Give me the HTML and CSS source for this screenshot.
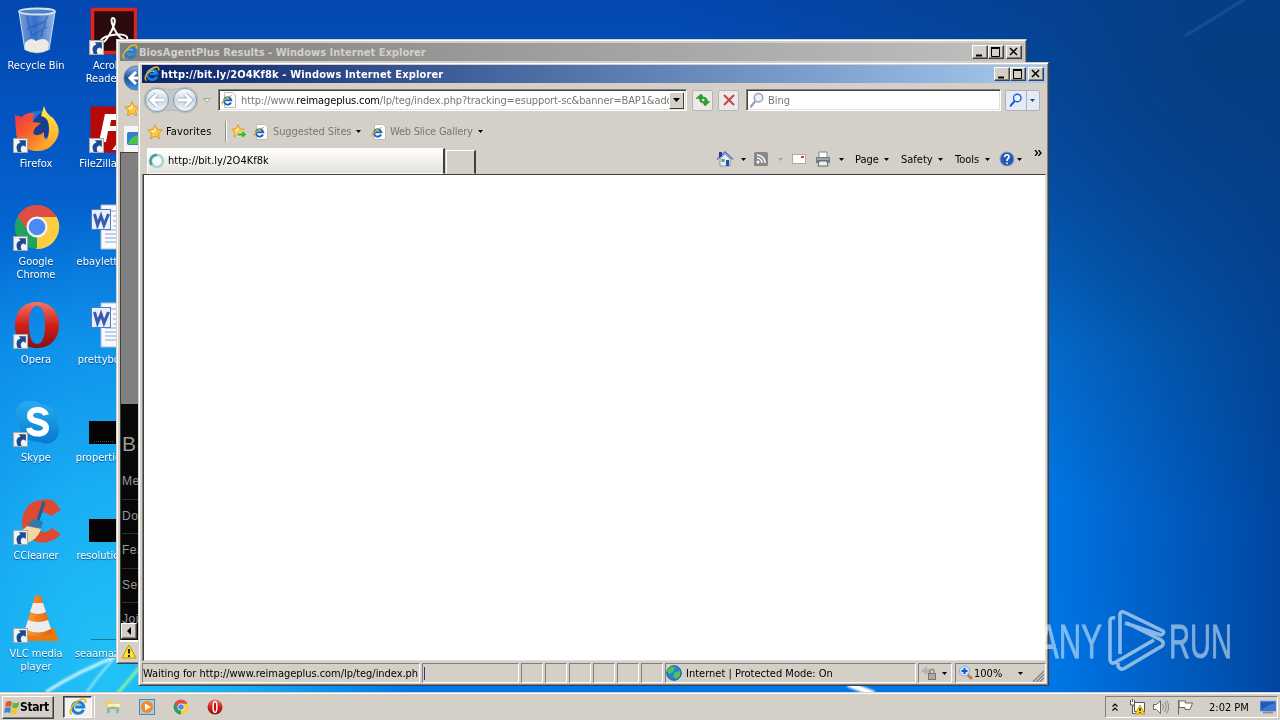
FILE: index.html
```html
<!DOCTYPE html>
<html lang="en">
<head>
<meta charset="utf-8">
<title>Desktop</title>
<link rel="stylesheet" href="styles.css">
</head>
<body>
<svg class="defs" width="0" height="0">
  <defs>
    <linearGradient id="red" x1="0" y1="0" x2="0" y2="1"><stop offset="0" stop-color="#f27468"/><stop offset=".5" stop-color="#d02018"/><stop offset="1" stop-color="#86100c"/></linearGradient>
    <linearGradient id="ball" x1="0" y1="0" x2="0" y2="1"><stop offset="0" stop-color="#fff"/><stop offset=".5" stop-color="#cbd9e4"/><stop offset="1" stop-color="#edf6fb"/></linearGradient>
    <linearGradient id="ballblue" x1="0" y1="0" x2="0" y2="1"><stop offset="0" stop-color="#8fb6e8"/><stop offset=".5" stop-color="#1d4f9e"/><stop offset="1" stop-color="#3f9be6"/></linearGradient>
    <linearGradient id="fox" x1="0" y1="0" x2="1" y2="1"><stop offset="0" stop-color="#f0304a"/><stop offset=".45" stop-color="#f8652a"/><stop offset="1" stop-color="#ffc62e"/></linearGradient>
    <linearGradient id="tail" x1="0" y1="0" x2="0" y2="1"><stop offset="0" stop-color="#fff04a"/><stop offset="1" stop-color="#ff9a22"/></linearGradient>
    <linearGradient id="glass" x1="0" y1="0" x2="1" y2="0"><stop offset="0" stop-color="#8fb0dc"/><stop offset=".45" stop-color="#3b74cc"/><stop offset="1" stop-color="#b3cdec"/></linearGradient>
    <linearGradient id="skype" x1="0" y1="0" x2="0" y2="1"><stop offset="0" stop-color="#25aef0"/><stop offset="1" stop-color="#0878d0"/></linearGradient>
    <linearGradient id="cone" x1="0" y1="0" x2="1" y2="0"><stop offset="0" stop-color="#ffa040"/><stop offset="1" stop-color="#e06008"/></linearGradient>
  </defs>
  <symbol id="shortcut" viewBox="0 0 14 14"><rect x=".5" y=".5" width="13" height="13" fill="#f2f4f8" stroke="#a9a9a9"/><path d="M4.500 13C2 8 4 4.500 7 4.500L5.500 2H12V8.500L10 7C7.500 7.500 6.500 9.500 8 13Z" fill="#1d4a8c"/></symbol>
  <symbol id="ie" viewBox="0 0 16 16"><path d="M12.800 10.400A5 5 0 1 1 13.100 8H5.500" fill="none" stroke="#1a7fd6" stroke-width="2.700"/><path d="M5 6.500A4 4 0 0 1 11 6.500" fill="none" stroke="#5cc0f5" stroke-width="1.300"/><path d="M2.500 14.500C-1 13 3 5 9 2C13 .2 15.500 1 14.500 4.500" fill="none" stroke="#f0b41c" stroke-width="1.500"/></symbol>
  <symbol id="iepage" viewBox="0 0 16 16"><path d="M3.500 .5H12L14.500 3V15.500H3.500Z" fill="#fff" stroke="#bdbdbd"/><path d="M10 10.500A3.700 3.700 0 1 1 10.300 8.300H4" fill="none" stroke="#1768b8" stroke-width="2"/><path d="M1.500 12.500C0 11 4 5 11 3.500" fill="none" stroke="#e2ac25" stroke-width="1.200"/></symbol>
  <symbol id="star" viewBox="0 0 16 16"><path d="M8 .8L10.200 5.400L15.300 6L11.600 9.500L12.500 14.800L8 12.200L3.500 14.800L4.400 9.500L.7 6L5.800 5.400Z" fill="#ffc53c" stroke="#d99a30"/><path d="M8 3L9 6.200L6 9L4 7L6.500 6.500Z" fill="#fff0ae"/></symbol>
  <symbol id="tri" viewBox="0 0 5 3"><path d="M0 0H5L2.500 3Z" fill="currentColor"/></symbol>
  <symbol id="chrome" viewBox="0 0 48 48"><path d="M24 24L4.900 13A22 22 0 0 1 43 13Z" fill="#dd4f42"/><path d="M24 24L43.100 13A22 22 0 0 1 24 46Z" fill="#fccd42"/><path d="M24 24V46A22 22 0 0 1 4.900 13Z" fill="#20a35c"/><path d="M24 14H43.500A22 22 0 0 0 4.900 13L15.500 29Z" fill="#dd4f42"/><path d="M32.700 29L23 46A22 22 0 0 0 43.500 14H24Z" fill="#fccd42"/><circle cx="24" cy="24" r="10.500" fill="#f4f4f4"/><circle cx="24" cy="24" r="8.300" fill="#4b8af4"/></symbol>
  <symbol id="opera" viewBox="0 0 48 48"><path fill-rule="evenodd" d="M24 1C37 1 46 10 46 24S37 47 24 47S2 38 2 24S11 1 24 1ZM24 5C18 5 16 14 16 24S18 43 24 43S32 34 32 24S30 5 24 5Z" fill="url(#red)"/></symbol>
  <symbol id="word" viewBox="0 0 48 48"><path d="M12 2H46V46H12Z" fill="#f8faff" stroke="#aebbd0"/><path d="M22 8H46M24 13H46M24 18H46M24 23H46M16 27H46M16 31H46M16 35H46M16 39H46" stroke="#8ba4d6"/><rect x="2.500" y="6.500" width="19" height="20" fill="#e9effb" stroke="#5478c2"/><path d="M5.500 11L8.500 22L12 13L15 22L19.500 11" fill="none" stroke="#355caf" stroke-width="3"/></symbol>
  <symbol id="dark" viewBox="0 0 48 48"><rect x="0" y="22" width="48" height="23" fill="#040404"/></symbol>
  <symbol id="magnifier" viewBox="0 0 16 16"><path d="M6.500 9L2 14.500" stroke="currentColor" stroke-width="2.400" stroke-linecap="round"/><circle cx="9.500" cy="5.700" r="4.300" fill="#e8f1ff" stroke="currentColor" stroke-width="1.500"/></symbol>
</svg>

<main class="desktop">
  <svg class="rays" viewBox="0 0 1280 694">
    <defs><filter id="soft"><feGaussianBlur stdDeviation="1.300"/></filter></defs>
    <g filter="url(#soft)" fill="none">
      <path d="M46 692Q80 670 125 653" stroke="#c9f4ff" stroke-width="3"/>
      <path d="M87 692Q98 676 116 656" stroke="#9be8fb" stroke-width="2"/>
      <path d="M117 694L150 655" stroke="#8af0a0" stroke-width="3"/>
      <path d="M848 684L874 694" stroke="#fff" stroke-width="6"/>
      <path d="M1185 36L1250 -4" stroke="#3a76b8" stroke-width="1.500" opacity=".6"/>
    </g>
  </svg>

  <div class="icons">
    <div class="item"><svg class="pic" viewBox="0 0 48 48"><path d="M6 4L12 43Q24 50 36 43L42 4Z" fill="url(#glass)" opacity=".85"/><path d="M12 36Q18 29 23 34Q32 29 36 36L35 43Q24 49 12 43Z" fill="#eceae4"/><path d="M14 9L19 30M34 9L28 30M14 22L33 14M20 28L34 20" stroke="#2b5cb0" stroke-width="2" opacity=".6"/><ellipse cx="24" cy="4.500" rx="18" ry="3" fill="#4c80cc" stroke="#d8e2ec" stroke-width="1.800"/><path d="M6 5L12 43M42 5L36 43" stroke="#c9dbf0"/></svg><span>Recycle Bin</span></div>
    <div class="item"><svg class="pic" viewBox="0 0 48 48"><rect x="3.500" y="2.500" width="43" height="43" fill="#2b0b0d" stroke="#e2231a" stroke-width="3.500"/><path d="M24 11C28 11 25 21 19 30C14 38 9 37 12 33C16 28 34 25 38 30C40 35 32 34 27 25C23 19 21 11 24 11Z" fill="none" stroke="#fff" stroke-width="2"/></svg><svg class="badge"><use href="#shortcut"/></svg><span>Acrobat<br>Reader DC</span></div>
    <div class="item"><svg class="pic" viewBox="0 0 48 48"><circle cx="25" cy="25" r="19" fill="#1b75d8"/><path d="M25 10Q33 3 42 17L40 30L24 35L14 24Z" fill="#173f90"/><path d="M2 10L9 12Q14 6 22 9Q19 13 20 17L28 18L22 23L20 28Q24 33 31 27Q30 38 40 34Q34 47 22 46Q4 44 3 27Z" fill="url(#fox)"/><path d="M31 1Q33 9 40 13Q51 26 41 38Q34 47 23 46Q36 39 36 24Q36 12 28 11Z" fill="url(#tail)"/></svg><svg class="badge"><use href="#shortcut"/></svg><span>Firefox</span></div>
    <div class="item"><svg class="pic" viewBox="0 0 48 48"><rect x="2" y="2" width="45" height="45" fill="#b40a0a" stroke="#b40a0a" stroke-width="2" stroke-dasharray="3 2"/><path d="M10 37L16 9H33L32 15H22L21 21H31L30 26H19L17 37ZM28 21H47L34 39H47V45H23L38 26H27Z" fill="#fff"/></svg><svg class="badge"><use href="#shortcut"/></svg><span class="fz">FileZilla Client</span></div>
    <div class="item"><svg class="pic"><use href="#chrome"/></svg><svg class="badge"><use href="#shortcut"/></svg><span>Google<br>Chrome</span></div>
    <div class="item"><svg class="pic"><use href="#word"/></svg><span>ebayletters.rtf</span></div>
    <div class="item"><svg class="pic"><use href="#opera"/></svg><svg class="badge"><use href="#shortcut"/></svg><span>Opera</span></div>
    <div class="item"><svg class="pic"><use href="#word"/></svg><span>prettybook.rtf</span></div>
    <div class="item"><svg class="pic" viewBox="0 0 48 48"><path d="M14 2Q22 1 28 5Q44 7 44 24Q49 35 41 42Q34 47 27 43Q7 43 6 24Q0 12 6 6Q10 2 14 2Z" fill="url(#skype)"/><path d="M33 16C31 9 17 9 17 17C17 24 33 21 33 29C33 37 17 36 16 29" fill="none" stroke="#fff" stroke-width="6"/></svg><svg class="badge"><use href="#shortcut"/></svg><span>Skype</span></div>
    <div class="item"><svg class="pic"><use href="#dark"/><path d="M5 42.500H24" stroke="#56501b" stroke-dasharray="1 1"/></svg><span>properties.png</span></div>
    <div class="item"><svg class="pic" viewBox="0 0 48 48"><path d="M41 4L48 13L38 19Q31 12 25 19Q19 28 27 34Q33 37 39 31L48 37Q38 48 24 45Q9 40 9 24Q11 5 28 3Q36 1 41 4Z" fill="#dc4a32"/><path d="M31 5L25 23" stroke="#1b5f94" stroke-width="3"/><path d="M17 25Q24 20 30 25L28 31L14 29Z" fill="#2c7bb3"/><path d="M14 29L28 32Q25 42 14 46L2 36Q10 34 14 29Z" fill="#f4d6a2"/></svg><svg class="badge"><use href="#shortcut"/></svg><span>CCleaner</span></div>
    <div class="item"><svg class="pic"><use href="#dark"/></svg><span>resolution.png</span></div>
    <div class="item"><svg class="pic" viewBox="0 0 48 48"><path d="M10 33H41L46 46H10L3 43Z" fill="#e8790f"/><path d="M22 1Q25 -1 28 1L39 38Q25 45 11 38Z" fill="url(#cone)"/><path d="M20 8L30 8L33 17Q25 21 17 17ZM15 25Q25 29 35 25L38 34Q25 41 12 34Z" fill="#ececec"/></svg><svg class="badge"><use href="#shortcut"/></svg><span>VLC media<br>player</span></div>
    <div class="item"><svg class="pic" viewBox="0 0 48 48"><path d="M2 44.500H48" stroke="#1b7391"/></svg><span>seaamazing.rtf</span></div>
  </div>

  <section class="window back">
    <header class="titlebar"><svg class="i16"><use href="#ie"/></svg><b>BiosAgentPlus Results - Windows Internet Explorer</b>
      <div class="controls"><i class="ctl"><svg viewBox="0 0 14 12"><path d="M3 9.500H9" stroke="#000" stroke-width="2"/></svg></i><i class="ctl"><svg viewBox="0 0 14 12"><path d="M2.500 2V10.500H10.500V2" fill="none" stroke="#000"/><path d="M2 2H11" stroke="#000" stroke-width="2"/></svg></i><i class="ctl close"><svg viewBox="0 0 14 12"><path d="M3 2L10 9M10 2L3 9" stroke="#000" stroke-width="1.500"/></svg></i></div>
    </header>
    <div class="strip">
      <svg class="ball" viewBox="0 0 26 26"><circle cx="13" cy="13" r="12" fill="url(#ballblue)" stroke="#5e7592"/><path d="M20 13H7M13 7L7 13L13 19" fill="none" stroke="#fff" stroke-width="3"/></svg>
      <svg class="i16"><use href="#star"/></svg>
      <div class="minitab"><svg viewBox="0 0 16 16"><rect x="1" y="2" width="15" height="13" rx="2" fill="#347bd2"/><path d="M2 14Q4 5 16 5V14Z" fill="#48c452"/></svg></div>
    </div>
    <div class="page">
      <div class="sky"></div>
      <div class="menu"><h1>Ba</h1><p>Me</p><p>Do</p><p>Fea</p><p>Se</p><p>Joi</p><i class="scroll"><svg viewBox="0 0 8 8"><path d="M6 0V8L2 4Z"/></svg></i></div>
    </div>
    <footer class="warn"><svg viewBox="0 0 16 16"><path d="M8 1L15 14H1Z" fill="#ffe22e" stroke="#c09300"/><path d="M8 5V9.500M8 11V13" stroke="#000" stroke-width="1.700"/></svg></footer>
  </section>

  <section class="window front">
    <header class="titlebar"><svg class="i16"><use href="#ie"/></svg><b>http://bit.ly/2O4Kf8k - Windows Internet Explorer</b>
      <div class="controls"><i class="ctl"><svg viewBox="0 0 14 12"><path d="M3 9.500H9" stroke="#000" stroke-width="2"/></svg></i><i class="ctl"><svg viewBox="0 0 14 12"><path d="M2.500 2V10.500H10.500V2" fill="none" stroke="#000"/><path d="M2 2H11" stroke="#000" stroke-width="2"/></svg></i><i class="ctl close"><svg viewBox="0 0 14 12"><path d="M3 2L10 9M10 2L3 9" stroke="#000" stroke-width="1.500"/></svg></i></div>
    </header>
    <div class="nav">
      <svg class="backfwd" viewBox="0 0 56 28"><path d="M14 1Q28 6 42 1A13 13 0 0 1 42 27Q28 21 14 27A13 13 0 0 1 14 1Z" fill="#c4c8ca" stroke="#b7b7b2"/><circle cx="14" cy="14" r="11.500" fill="url(#ball)" stroke="#8195a5"/><circle cx="42" cy="14" r="11.500" fill="url(#ball)" stroke="#8195a5"/><g fill="none" stroke="#9cb0c0" stroke-width="4.500"><path d="M21 14H9M14 8L8 14L14 20M35 14H47M42 8L48 14L42 20"/></g><g fill="none" stroke="#fff" stroke-width="2.800"><path d="M21 14H9M14 8L8 14L14 20M35 14H47M42 8L48 14L42 20"/></g></svg>
      <svg class="hist" viewBox="0 0 8 5"><path d="M.5 .5H7.500L4 4.500Z" fill="#e8e8e4" stroke="#aaa69c"/></svg>
      <div class="address"><svg class="i16"><use href="#iepage"/></svg><span class="url">http://www.<em>reimageplus.com</em>/lp/teg/index.php?tracking=esupport-sc&amp;banner=BAP1&amp;ado</span><i class="drop"><svg viewBox="0 0 7 4"><path d="M0 0H7L3.500 4Z"/></svg></i></div>
      <i class="tool"><svg viewBox="0 0 16 16"><path d="M6 2L1 6.500H4.500Q4.500 10 7 11Q6.500 9 7 6.500H9.500ZM10 14L15 9.500H12.500Q12.500 6 9.500 5Q10 7 9.500 9.500H7Z" fill="#28a428" stroke="#17801c" stroke-width=".5"/></svg></i>
      <i class="tool stop"><svg viewBox="0 0 16 16"><path d="M3 3L13 13M13 3L3 13" stroke="#c9434b" stroke-width="2"/></svg></i>
      <div class="search"><svg class="i16"><use href="#magnifier"/></svg>Bing</div>
      <div class="go"><svg class="glass"><use href="#magnifier"/></svg><span><svg class="tri"><use href="#tri"/></svg></span></div>
    </div>
    <div class="favs">
      <svg class="i16"><use href="#star"/></svg><span class="fav">Favorites</span><hr>
      <svg class="i16" viewBox="0 0 16 16"><use href="#star" width="14" height="14"/><path d="M6 9H11V6L16 10.500L11 15V12H6Z" fill="#35b935" stroke="#fff" stroke-width=".6"/></svg>
      <svg class="i16 sug"><use href="#iepage"/></svg><span class="link">Suggested Sites</span><svg class="tri"><use href="#tri"/></svg>
      <svg class="i16 slice"><use href="#iepage"/></svg><span class="link gallery">Web Slice Gallery</span><svg class="tri"><use href="#tri"/></svg>
    </div>
    <div class="tabs">
      <div class="tab"><svg class="i16" viewBox="0 0 16 16"><circle cx="8" cy="8" r="6" fill="#f4f8f8" stroke="#a8d5d2" stroke-width="2.500"/><path d="M8 2A6 6 0 0 0 3 12" fill="none" stroke="#38a69a" stroke-width="2.500"/></svg><span>http://bit.ly/2O4Kf8k</span></div><div class="newtab"></div>
      <div class="commands">
        <svg class="i16" viewBox="0 0 16 16"><path d="M3 8V15H13V8L8 3Z" fill="#e9edfa" stroke="#8393c2"/><path d="M0 8.500L8 1L16 8.500" fill="none" stroke="#5974bd" stroke-width="1.500"/><path d="M2 1H5V5L2 7Z" fill="#3434a4"/><path d="M9 9H12V15H9Z" fill="#23529f"/><path d="M4.500 8H7.500V11H4.500Z" fill="#55a451"/></svg><svg class="tri a"><use href="#tri"/></svg>
        <svg class="i16 b" viewBox="0 0 16 16"><rect x="1" y="1" width="14" height="14" rx="1.500" fill="#888"/><path d="M4 7A5 5 0 0 1 9 12M4 4A8 8 0 0 1 12 12" fill="none" stroke="#fff" stroke-width="1.500"/><circle cx="5" cy="11" r="1.500" fill="#fff"/></svg><svg class="tri off"><use href="#tri"/></svg>
        <svg class="i16 b" viewBox="0 0 16 16"><rect x="1.500" y="3.500" width="13" height="9" fill="#fdfdfd" stroke="#aaa"/><path d="M10 6H13" stroke="#d43b31" stroke-width="2"/></svg>
        <svg class="i16 print" viewBox="0 0 16 16"><path d="M4 1H12V7H4Z" fill="#fff" stroke="#888"/><path d="M1 6H15V12H1Z" fill="#747c82"/><path d="M2 8H14" stroke="#b9d0e0"/><path d="M4 10H12L13 15H3Z" fill="#e7f2fa" stroke="#666"/></svg><svg class="tri a"><use href="#tri"/></svg>
        <span class="cmd page-cmd">Page</span><svg class="tri"><use href="#tri"/></svg><span class="cmd safety">Safety</span><svg class="tri"><use href="#tri"/></svg><span class="cmd tools">Tools</span><svg class="tri"><use href="#tri"/></svg>
        <svg class="i16 help" viewBox="0 0 16 16"><circle cx="8" cy="8" r="7" fill="#2857b5" stroke="#7e9ccc"/><path d="M5.500 6Q6 3.500 8.500 3.800Q11 4.500 9.500 7Q8 8 8 10M8 11.500V13" fill="none" stroke="#fff" stroke-width="1.700"/></svg><svg class="tri"><use href="#tri"/></svg><svg class="more" viewBox="0 0 8 6"><path d="M1 0L3.500 3L1 6M4.500 0L7 3L4.500 6" fill="none" stroke="#000" stroke-width="1.300"/></svg>
      </div>
    </div>
    <div class="view"></div>
    <footer class="status">
      <div class="cell waiting">Waiting for http://www.reimageplus.com/lp/teg/index.ph</div><div class="cell progress"><i></i></div>
      <div class="cell"></div><div class="cell"></div><div class="cell"></div><div class="cell"></div><div class="cell"></div><div class="cell"></div>
      <div class="cell zone"><svg class="i16" viewBox="0 0 16 16"><circle cx="8" cy="8" r="7.300" fill="#2585d2" stroke="#1b5c92"/><path d="M3 3Q7 0 9 3L7 7L3 9L1 6ZM9 7L14 6L14 11L10 14L7 11Z" fill="#55c05a"/></svg><span>Internet | Protected Mode: On</span></div>
      <div class="cell lock"><svg class="i16" viewBox="0 0 16 16"><path d="M0 6L6 1V4H9V8H6V10Z" fill="#b5b3ad"/><rect x="7.500" y="8.500" width="7" height="6" fill="#aaa" stroke="#777"/><path d="M9 8V5.500Q11 3 13 5.500V8" fill="none" stroke="#888" stroke-width="1.500"/></svg><svg class="tri"><use href="#tri"/></svg></div>
      <div class="cell zoom"><svg class="i16" viewBox="0 0 16 16"><path d="M9 9L14 14" stroke="#bd8057" stroke-width="3"/><circle cx="6.500" cy="6" r="5" fill="#cfe8ff" stroke="#8aa9cc"/><path d="M6.500 3V9M3.500 6H9.500" stroke="#145abc" stroke-width="2"/></svg><span>100%</span><svg class="tri"><use href="#tri"/></svg><svg class="grip" viewBox="0 0 14 14"><path d="M1 14L14 1M5 14L14 5M9 14L14 9" stroke="#808080" stroke-width="1.500"/></svg></div>
    </footer>
  </section>

  <svg class="watermark" viewBox="0 0 204 70">
    <g fill="#fff" stroke="#fff" stroke-width=".8" font-family="Liberation Sans" font-size="49" opacity=".5"><text x="2" y="50" textLength="64" lengthAdjust="spacingAndGlyphs">ANY</text><text x="133" y="50" textLength="63" lengthAdjust="spacingAndGlyphs">RUN</text></g>
    <path d="M79 10Q74 9 74 13V52Q75 57 80 54L118 32M84 46V6Q85 2 90 5L127 23Q129 25 125 27L89 15M82 55V58Q84 63 89 60L126 38Q129 35 125 32L91 15" fill="none" stroke="#fff" stroke-width="3.600" opacity=".55"/>
  </svg>
</main>

<nav class="taskbar">
  <div class="start"><svg class="i16" viewBox="0 0 16 16"><path d="M2 2Q5 0 8 2L7 7Q4 5.500 1 7Z" fill="#e8532a"/><path d="M9 2.500Q12 4 15.500 2L14 7.500Q11 9 8 7.500Z" fill="#68b43a"/><path d="M1 8Q4 6.500 7 8L6 13Q3 11.500 0 13Z" fill="#3b83dc"/><path d="M8 8.500Q11 10 14 8.500L12.500 14Q10 15 6.500 13.500Z" fill="#f5c52a"/></svg><b>Start</b></div>
  <div class="active"><svg><use href="#ie"/></svg></div>
  <div class="pins">
    <svg viewBox="0 0 16 16"><path d="M1 2H6L7 4H15V12H1Z" fill="#f0ce61"/><path d="M3 5H15V8H3Z" fill="#fff1a8"/><path d="M2 14V9Q8 6 14 9V14H11V10H5V14Z" fill="#74b9df"/></svg>
    <svg viewBox="0 0 16 16"><rect x=".5" y=".5" width="15" height="15" fill="#a9cbea" stroke="#4b86c2"/><circle cx="8" cy="8" r="6" fill="#f38a18"/><path d="M6 4.500L12 8L6 11.500Z" fill="#fff"/></svg>
    <svg viewBox="0 0 48 48"><use href="#chrome"/></svg>
    <svg viewBox="0 0 16 16"><circle cx="8" cy="8" r="7.500" fill="url(#red)"/><path d="M8 2.500C5.500 2.500 5.500 13.500 8 13.500S10.500 2.500 8 2.500Z" fill="#c01010" stroke="#fff" stroke-width="1.500"/></svg>
  </div>
  <div class="tray">
    <svg class="chev" viewBox="0 0 6 8"><path d="M.5 3.500L3 1L5.500 3.500M.5 7.500L3 5L5.500 7.500" fill="none" stroke="#000" stroke-width="1.200"/></svg>
    <svg class="i16 net" viewBox="0 0 16 16"><path d="M5.500 3.500H15.500V12.500H5.500ZM3.500 7V14.500H8" fill="#fff" stroke="#555"/><path d="M1.500 1V6H5.500V1M3.500 0V3" fill="#fff" stroke="#555"/><path d="M11 6L16 15H6Z" fill="#ffd51a" stroke="#a98600" stroke-width=".7"/><path d="M11 9V12M11 13V14" stroke="#000" stroke-width="1.200"/></svg>
    <svg class="i16 vol" viewBox="0 0 16 16"><path d="M.5 5.500H3.500L7.500 1.500V14.500L3.500 10.500H.5Z" fill="#fff" stroke="#666"/><path d="M9.500 5Q11.500 8 9.500 11M11.500 3Q15 8 11.500 13M13.500 1.500Q18 8 13.500 14.500" fill="none" stroke="#888"/></svg>
    <svg class="i16 flag" viewBox="0 0 16 16"><path d="M1.500 1V15.500M2 2H8.500V4H15.500L13 10.500H8V8.500H2Z" fill="#fff" stroke="#666"/></svg>
    <span>2:02 PM</span>
    <svg class="i16 desk" viewBox="0 0 16 16"><path d="M0 2H16V12H0Z" fill="#205ab8" stroke="#83a9e0"/><path d="M0 12Q8 5 16 4V12Z" fill="#3d78d0"/><path d="M3 13.500H13" stroke="#8c8c8c" stroke-width="2"/></svg>
  </div>
</nav>
</body>
</html>
```
FILE: styles.css
```css
* { box-sizing: border-box; }
body { margin: 0; width: 1280px; height: 720px; overflow: hidden; display: flex; flex-direction: column; font: 11px/13px "DejaVu Sans Condensed", "DejaVu Sans", sans-serif; color: #000; white-space: nowrap; }
svg { display: block; flex: none; }
i { font-style: normal; flex: none; }
.defs { position: absolute; }
.i16 { width: 16px; height: 16px; }
.tri { width: 5px; height: 3px; }

.desktop { position: relative; height: 693px; overflow: hidden; background:
  radial-gradient(ellipse 300px 480px at 110px 680px, #22c2f8 0%, rgba(30,184,246,.85) 40%, rgba(20,160,240,0) 100%),
  radial-gradient(ellipse 560px 460px at 1230px 60px, rgba(6,60,122,.85), rgba(0,52,120,0)),
  linear-gradient(90deg, rgba(0,72,170,0) 0, rgba(0,72,170,0) 82%, rgba(0,62,148,.85) 100%),
  linear-gradient(180deg, #0347b0 0, #0459c6 22%, #0378e2 50%, #0074e4 80%, #0077e8 100%); }
.rays { position: absolute; inset: 0; width: 1280px; height: 694px; }

.icons { position: relative; display: grid; grid-template-columns: 76px 76px; grid-auto-rows: 98px; width: 152px; left: -1px; }
.item { position: relative; display: flex; flex-direction: column; align-items: center; padding-top: 7px; color: #fff; text-align: center; }
.item span { margin-top: 4px; text-shadow: 0 1px 1px rgba(0,30,80,.7); margin-left: -2px; }
.item .fz { margin-left: 2px; }
.pic { width: 48px; height: 48px; margin-left: -1px; }
.badge { position: absolute; left: 14px; top: 40px; width: 15px; height: 15px; }

.window { position: absolute; display: flex; flex-direction: column; background: #d4d0c8; border: 1px solid; border-color: #d4d0c8 #404040 #404040 #d4d0c8; box-shadow: inset 1px 1px #fff, inset -1px -1px #808080; padding: 2px; }
.back { left: 116px; top: 39px; width: 911px; height: 625px; padding-left: 3px; padding-top: 3px; }
.front { left: 138px; top: 62px; width: 911px; height: 624px; padding-left: 3px; }
.titlebar { flex: none; height: 18px; display: flex; align-items: center; padding: 0 2px 0 2px; gap: 1px; color: #fff; }
.front .titlebar { background: linear-gradient(90deg, #0a246a, #a6caf0); letter-spacing: .14px; }
.back .titlebar { background: linear-gradient(90deg, #808080, #c0c0c0); color: #d4d0c8; letter-spacing: .02px; }
.titlebar b { font-size: 11px; }
.controls { margin-left: auto; display: flex; }
.ctl, .scroll { width: 16px; height: 14px; background: #d4d0c8; border: 1px solid; border-color: #fff #404040 #404040 #fff; box-shadow: inset -1px -1px #808080; }
.ctl svg { width: 14px; height: 12px; }
.close { margin-left: 2px; }

.strip { height: 91px; padding: 4px 0 0 3px; }
.ball { width: 26px; height: 26px; }
.strip .i16 { margin: 10px 0 0 1px; }
.minitab { margin: 9px 0 0 1px; padding: 4px 2px; width: 300px; height: 26px; background: #f6f6f4; }
.minitab svg { width: 16px; height: 16px; }
.page { flex: 1; border: 1px solid #404040; border-width: 1px 0 0 1px; display: flex; flex-direction: column; background: #080808; overflow: hidden; }
.sky { height: 251px; background: #808080; flex: none; }
.menu { color: #999; padding-left: 1px; font: 12px/34px "Liberation Sans", sans-serif; }
.menu h1 { margin: 0; font-weight: 400; font-size: 21px; line-height: 80px; height: 61px; letter-spacing: 1px; }
.menu p { margin: 0; height: 34.500px; border-bottom: 1px solid #303030; font-size: 12px; line-height: 32px; letter-spacing: .5px; }
.menu p:nth-of-type(5) { height: 23px; border: 0; overflow: hidden; }
.scroll { display: block; height: 16px; padding: 3px; }
.menu .scroll { position: relative; margin-top: -3px; margin-left: -1px; }
.scroll svg { width: 8px; height: 8px; }
.warn { height: 21px; padding: 2px 1px; flex: none; border-top: 2px solid #fff; }
.warn svg { width: 16px; height: 16px; }

.nav { height: 34px; display: flex; align-items: center; padding-left: 1px; flex: none; }
.backfwd { width: 56px; height: 28px; }
.hist { width: 8px; height: 5px; margin: 0 7px 0 4px; }
.address, .search { height: 22px; background: #fff; border: 1px solid; border-color: #808080 #fff #fff #808080; box-shadow: inset 1px 1px #404040, inset -1px -1px #e4e0d8; display: flex; align-items: center; color: #777; }
.address { width: 469px; padding: 2px; }
.address .i16 { margin-right: 4px; }
.url { width: 428px; overflow: hidden; letter-spacing: -.13px; }
.url em { font-style: normal; color: #000; }
.drop { width: 15px; height: 17px; margin-left: auto; background: #d4d0c8; border: 1px solid; border-color: #fff #404040 #404040 #fff; display: grid; place-items: center; }
.drop svg { width: 7px; height: 4px; }
.tool { width: 21px; height: 21px; margin-left: 5px; border: 1px solid #b2b6ba; border-radius: 2px; background: #ebeae8; display: grid; place-items: center; }
.tool svg { width: 16px; height: 16px; }
.search { width: 255px; margin-left: 7px; padding-left: 2px; gap: 3px; }
.search .i16 { color: #9ca3b8; }
.go { width: 35px; height: 21px; margin-left: 4px; border: 1px solid #aab3c6; border-radius: 2px; background: #e6ebf2; display: flex; align-items: center; padding-left: 3px; color: #1855dc; }
.glass { width: 14px; height: 14px; }
.go span { height: 19px; margin-left: 3px; padding: 8px 3px; border-left: 1px solid #aab3c6; color: #104ca0; }

.favs { height: 29px; display: flex; align-items: center; padding-left: 5px; flex: none; }
.fav { margin-left: 3px; width: 47px; letter-spacing: .1px; }
.favs hr { width: 2px; height: 21px; margin: 0 4px 0 12px; border: 0; border-left: 1px solid #909090; background: #fff; }
.sug { margin-left: 6px; }
.link { color: #777; margin: 0 5px 0 4px; width: 78px; letter-spacing: -.1px; }
.slice { margin-left: 10px; }
.gallery { width: 83px; margin-left: 3px; letter-spacing: -.22px; }

.tabs { height: 28px; display: flex; padding-left: 5px; align-items: flex-end; flex: none; }
.tab { width: 298px; height: 26px; background: linear-gradient(#fff, #e4e2dc); border: 1px solid; border-color: #fff #404040 transparent #fff; border-right-width: 2px; display: flex; align-items: center; gap: 3px; padding-left: 1px; }
.tab span { margin-bottom: 1px; }
.newtab { width: 30px; height: 24px; margin-left: 1px; border: 1px solid; border-color: #fff #404040 transparent #fff; border-right-width: 2px; }
.commands { margin-left: 241px; height: 28px; display: flex; align-items: center; padding-bottom: 2px; }
.a { margin-left: 8px; }
.b { margin-left: 7px; }
.off { color: #a8a49c; margin-left: 9px; }
.off + .b { margin-left: 8px; }
.print { margin-left: 8px; }
.page-cmd { margin-left: 11px; width: 29px; }
.safety { margin-left: 12px; width: 37px; }
.tools { margin-left: 12px; width: 30px; }
.help { margin: 0 2px 0 9px; }
.more { width: 8px; height: 6px; margin: -13px 0 0 12px; }

.view { flex: 1; background: #fff; border: 1px solid; border-color: #404040 #e4e0d8 #e4e0d8 #404040; box-shadow: -1px 0 #808080; margin: 0 0 0 1px; }
.status { height: 22px; display: flex; gap: 2px; padding-top: 2px; flex: none; }
.cell { width: 22px; height: 20px; flex: none; border: 1px solid; border-color: #808080 #fff #fff #808080; display: flex; align-items: center; }
.waiting { width: 278px; overflow: hidden; letter-spacing: -.04px; }
.progress { width: 97px; }
.progress i { width: 1px; height: 13px; margin-left: 1px; background: #333a80; }
.zone { width: 251px; gap: 4px; }
.lock { width: 34px; padding-left: 2px; gap: 5px; }
.zoom { width: 91px; padding-left: 2px; margin-left: 1px; }
.zoom span { width: 44px; }
.grip { width: 12px; height: 12px; margin: 6px 0 0 9px; }
.watermark { position: absolute; left: 1036px; top: 608px; width: 204px; height: 70px; }

.taskbar { position: relative; height: 27px; background: #d4d0c8; border-top: 1px solid #fff; box-shadow: 0 -1px #d4d0c8; display: flex; align-items: flex-start; padding: 2px; }
.start { width: 52px; height: 23px; border: 1px solid; border-color: #fff #404040 #404040 #fff; box-shadow: inset -1px -1px #808080; display: flex; align-items: center; padding-left: 1px; font-size: 12px; letter-spacing: -.4px; }
.active { width: 29px; height: 22px; margin-left: 9px; border: 1px solid; border-color: #404040 #fff #fff #404040; background: #f4f2ee; padding: 1px 5px; box-shadow: inset 1px 1px #808080, 2px 0 #d4d0c8, 3px 0 #fff; }
.active svg { width: 18px; height: 18px; }
.pins { display: flex; gap: 18px; margin: 3px 0 0 13px; }
.pins svg { width: 16px; height: 16px; }
.tray { width: 173px; height: 22px; margin-left: auto; border: 1px solid; border-color: #808080 #fff #fff #808080; display: flex; align-items: center; padding-left: 6px; }
.chev { width: 6px; height: 8px; }
.net { margin-left: 11px; }
.vol { margin-left: 8px; }
.flag { margin-left: 8px; }
.tray span { margin-left: 16px; width: 40px; }
.desk { margin-left: 11px; }
```
